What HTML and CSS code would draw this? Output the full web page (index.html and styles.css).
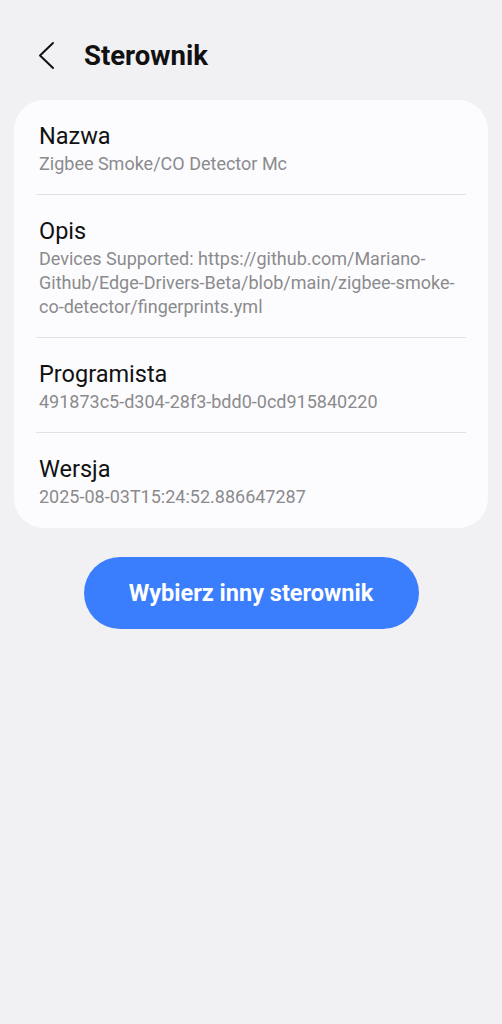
FILE: index.html
```html
<!DOCTYPE html>
<html lang="pl">
<head>
  <meta charset="UTF-8" />
  <meta name="viewport" content="width=device-width, initial-scale=1.0" />
  <title>Sterownik</title>
  <link rel="stylesheet" href="styles.css">
</head>
<body>

<div class="header">
  <button class="back" aria-label="Wstecz">
    <svg width="20" height="30" viewBox="0 0 20 30">
      <path d="M15 2 L2 14.5 L15 27" fill="none" stroke="#111" stroke-width="2" stroke-linecap="round" stroke-linejoin="round"/>
    </svg>
  </button>
  <h1 class="title">Sterownik</h1>
</div>

<div class="card">
  <div class="item">
    <div class="item-title">Nazwa</div>
    <div class="item-sub">Zigbee Smoke/CO Detector Mc</div>
  </div>
  <div class="item">
    <div class="item-title">Opis</div>
    <div class="item-sub">Devices Supported: https://github.com/Mariano-Github/Edge-Drivers-Beta/blob/main/zigbee-smoke-co-detector/fingerprints.yml</div>
  </div>
  <div class="item">
    <div class="item-title">Programista</div>
    <div class="item-sub">491873c5-d304-28f3-bdd0-0cd915840220</div>
  </div>
  <div class="item">
    <div class="item-title">Wersja</div>
    <div class="item-sub">2025-08-03T15:24:52.886647287</div>
  </div>
</div>

<div class="actions">
  <button class="primary">Wybierz inny sterownik</button>
</div>

</body>
</html>
```

FILE: styles.css
```css
body {
  margin: 0;
  background: #f1f0f3;
  font-family: Roboto, "Noto Sans", sans-serif;
  color: #111;
}
.header {
  display: flex;
  align-items: flex-start;
  height: 100px;
  padding: 40px 0 0 38px;
  box-sizing: border-box;
}
.back {
  background: none;
  border: none;
  padding: 0;
  width: 20px;
  height: 30px;
  margin-top: 1px;
}
.back svg { display: block; }
.title {
  margin: 0 0 0 26px;
  font-size: 27.5px;
  line-height: 32px;
  font-weight: bold;
}
.card {
  margin: 0 14px;
  background: #fcfcfe;
  border-radius: 30px;
  padding: 0 22px;
}
.item {
  padding: 22px 3px 18px;
  border-bottom: 1px solid #e2e2e4;
}
.item:last-child { border-bottom: none; padding-bottom: 19px; }
.item-title {
  font-size: 23.5px;
  line-height: 28px;
}
.item-sub {
  margin-top: 2px;
  font-size: 18px;
  line-height: 24px;
  color: #8b8b8d;
}
.actions {
  display: flex;
  justify-content: center;
  padding-top: 29px;
}
.primary {
  width: 335px;
  height: 72px;
  border: none;
  border-radius: 36px;
  background: #3a7dfd;
  color: #fff;
  font-family: Roboto, "Noto Sans", sans-serif;
  font-size: 23.5px;
  font-weight: bold;
}
```
